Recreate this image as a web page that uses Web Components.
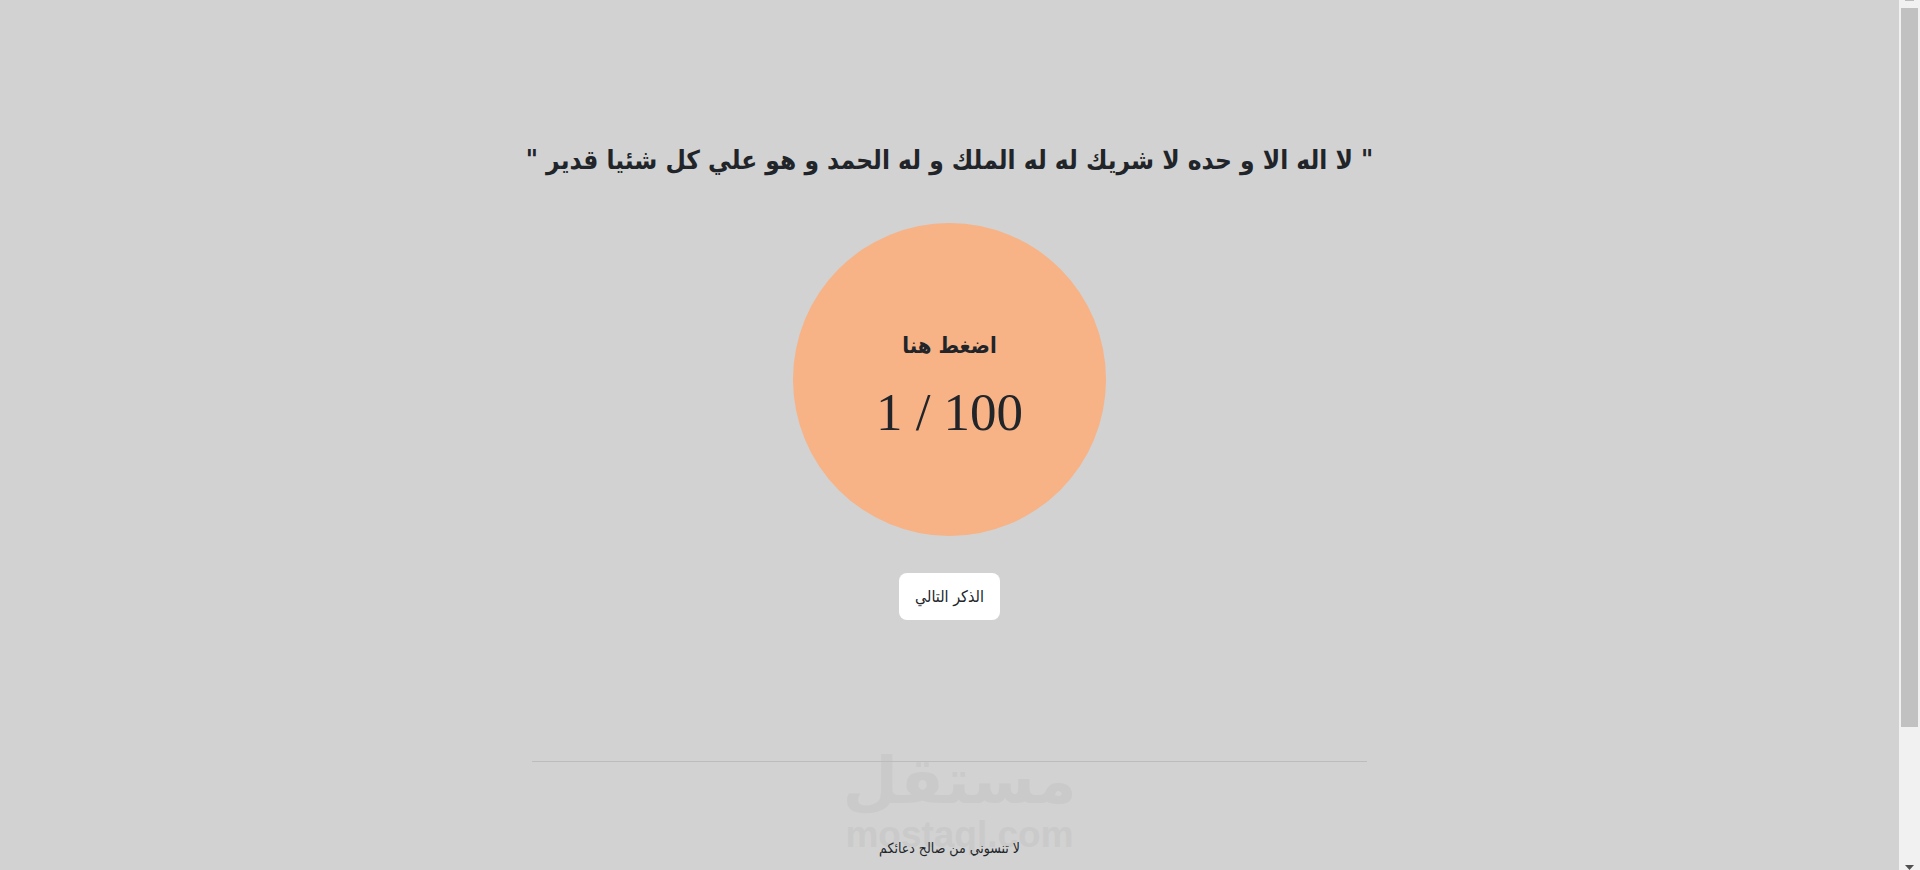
<!DOCTYPE html>
<html lang="ar">
<head>
<meta charset="utf-8">
<title>الأذكار</title>
<style>
  html, body { margin: 0; height: 100%; }
  body { background: #d2d2d2; color: #212529; font-family: "DejaVu Sans Condensed", "DejaVu Sans", sans-serif; }
</style>
</head>
<body>
<dhikr-page>
  <dhikr-title>" لا اله الا و حده لا شريك له له الملك و له الحمد و هو علي كل شئيا قدير "</dhikr-title>
  <dhikr-counter count="1" total="100">اضغط هنا</dhikr-counter>
  <next-button>الذكر التالي</next-button>
  <dhikr-footer slot="footer">لا تنسوني من صالح دعائكم</dhikr-footer>
</dhikr-page>
<script>
class BaseElement extends HTMLElement {
  constructor() {
    super();
    this.attachShadow({ mode: "open" }).innerHTML = this.constructor.markup;
  }
}

class DhikrPage extends BaseElement {
  static markup = `
    <style>
      :host { display: flex; height: 100vh; overflow: hidden; }
      .view { flex: 1; min-width: 0; overflow: hidden; }
      main { display: flex; flex-direction: column; align-items: center; padding-top: 128px; }
      .bottom { width: 44%; margin: 141px auto 0; }
    </style>
    <div class="view">
      <main><slot></slot></main>
      <div class="bottom"><slot name="footer"></slot></div>
    </div>
    <scroll-track></scroll-track>`;
}

class DhikrTitle extends BaseElement {
  static markup = `
    <style>
      :host { display: block; }
      h1 { margin: 0; font-size: 26px; line-height: 64px; font-weight: 700; white-space: nowrap; direction: rtl; }
    </style>
    <h1><slot></slot></h1>`;
}

class DhikrCounter extends BaseElement {
  static markup = `
    <style>
      :host { display: block; margin-top: 31px; }
      button { display: flex; flex-direction: column; align-items: center; justify-content: center;
        width: 313px; height: 313px; padding: 8px 0 0; border: 0; border-radius: 50%;
        background: #f7b286; color: inherit; font: inherit; cursor: pointer; }
      .label { font-size: 22px; line-height: 56px; font-weight: 700; direction: rtl; }
      .count { font-family: "Liberation Serif", serif; font-size: 53px; line-height: 76px; direction: ltr; }
    </style>
    <button type="button"><span class="label"><slot></slot></span><span class="count"></span></button>`;
  connectedCallback() {
    this.shadowRoot.querySelector(".count").textContent =
      this.getAttribute("count") + " / " + this.getAttribute("total");
  }
}

class NextButton extends BaseElement {
  static markup = `
    <style>
      :host { display: block; margin-top: 37px; }
      button { height: 47px; padding: 0 16px; border: 0; border-radius: 8px; background: #fff;
        color: inherit; font: inherit; font-size: 16px; direction: rtl; cursor: pointer; }
    </style>
    <button type="button"><slot></slot></button>`;
}

class DhikrFooter extends BaseElement {
  static markup = `
    <style>
      :host { display: block; position: relative; }
      hr { position: relative; margin: 0; border: 0; border-top: 1px solid #bcbcbc; }
      p { position: relative; margin: 72px 0 64px; font-size: 14px; line-height: 28px; text-align: center; direction: rtl; }
      site-mark { position: absolute; top: -16px; left: 50%; margin-left: -104px; }
    </style>
    <site-mark></site-mark>
    <hr>
    <p><slot></slot></p>`;
}

class SiteMark extends BaseElement {
  static markup = `
    <style>
      :host { display: flex; flex-direction: column; align-items: center; width: 228px; color: #cacaca; font-weight: 700; white-space: nowrap; pointer-events: none; }
      .ar { font-family: "DejaVu Sans", sans-serif; font-size: 64px; line-height: 72px; direction: rtl; }
      .en { font-family: "Liberation Sans", sans-serif; font-size: 37px; line-height: 36px; }
    </style>
    <span class="ar">مستقل</span>
    <span class="en">mostaql.com</span>`;
}

class ScrollTrack extends BaseElement {
  static markup = `
    <style>
      :host { display: flex; flex-direction: column; justify-content: space-between; align-items: center; width: 21px; background: #f1f1f1; }
      .up { width: 9px; height: 1px; background: #bcbcbc; }
      .thumb { width: 17px; flex: 720; margin-top: 7px; background: #c1c1c1; }
      .rest { flex: 138; }
      svg { display: block; }
    </style>
    <div class="up"></div>
    <div class="thumb"></div>
    <div class="rest"></div>
    <svg width="9" height="5" viewBox="0 0 9 5" aria-hidden="true"><path d="M0 0h9L4.500 5z" fill="#505050"/></svg>`;
}

customElements.define("scroll-track", ScrollTrack);
customElements.define("site-mark", SiteMark);
customElements.define("dhikr-title", DhikrTitle);
customElements.define("dhikr-counter", DhikrCounter);
customElements.define("next-button", NextButton);
customElements.define("dhikr-footer", DhikrFooter);
customElements.define("dhikr-page", DhikrPage);
</script>
</body>
</html>
